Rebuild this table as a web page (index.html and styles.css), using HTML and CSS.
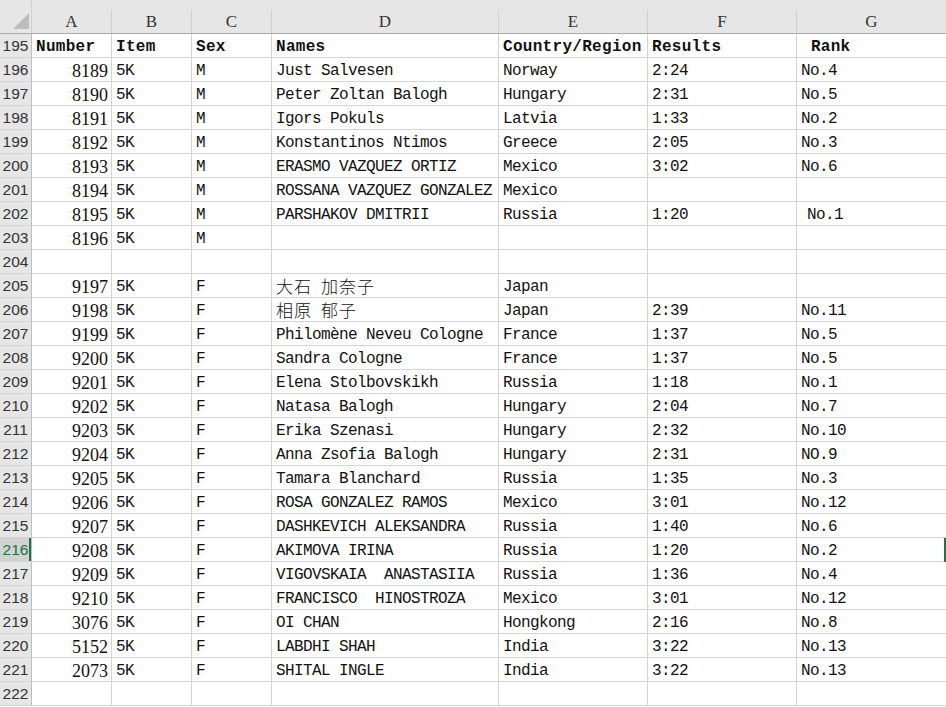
FILE: index.html
```html
<!DOCTYPE html>
<html>
<head>
<meta charset="utf-8">
<link rel="stylesheet" href="styles.css">
</head>
<body>
<div class="sheet">
  <div class="row head">
    <div class="corner"><svg width="32" height="33" viewBox="0 0 32 33"><polygon points="29,13 29,29 13,29" fill="#bdbdbd"/></svg></div>
    <div class="ch">A</div><div class="ch">B</div><div class="ch">C</div><div class="ch">D</div><div class="ch">E</div><div class="ch">F</div><div class="ch">G</div>
  </div>
  <div class="row bold"><div class="rh">195</div><div class="c">Number</div><div class="c">Item</div><div class="c">Sex</div><div class="c">Names</div><div class="c">Country/Region</div><div class="c">Results</div><div class="c"> Rank</div></div>
  <div class="row"><div class="rh">196</div><div class="c n">8189</div><div class="c">5K</div><div class="c">M</div><div class="c">Just Salvesen</div><div class="c">Norway</div><div class="c">2:24</div><div class="c">No.4</div></div>
  <div class="row"><div class="rh">197</div><div class="c n">8190</div><div class="c">5K</div><div class="c">M</div><div class="c">Peter Zoltan Balogh</div><div class="c">Hungary</div><div class="c">2:31</div><div class="c">No.5</div></div>
  <div class="row"><div class="rh">198</div><div class="c n">8191</div><div class="c">5K</div><div class="c">M</div><div class="c">Igors Pokuls</div><div class="c">Latvia</div><div class="c">1:33</div><div class="c">No.2</div></div>
  <div class="row"><div class="rh">199</div><div class="c n">8192</div><div class="c">5K</div><div class="c">M</div><div class="c">Konstantinos Ntimos</div><div class="c">Greece</div><div class="c">2:05</div><div class="c">No.3</div></div>
  <div class="row"><div class="rh">200</div><div class="c n">8193</div><div class="c">5K</div><div class="c">M</div><div class="c">ERASMO VAZQUEZ ORTIZ</div><div class="c">Mexico</div><div class="c">3:02</div><div class="c">No.6</div></div>
  <div class="row"><div class="rh">201</div><div class="c n">8194</div><div class="c">5K</div><div class="c">M</div><div class="c">ROSSANA VAZQUEZ GONZALEZ</div><div class="c">Mexico</div><div class="c"></div><div class="c"></div></div>
  <div class="row"><div class="rh">202</div><div class="c n">8195</div><div class="c">5K</div><div class="c">M</div><div class="c">PARSHAKOV DMITRII</div><div class="c">Russia</div><div class="c">1:20</div><div class="c ind">No.1</div></div>
  <div class="row"><div class="rh">203</div><div class="c n">8196</div><div class="c">5K</div><div class="c">M</div><div class="c"></div><div class="c"></div><div class="c"></div><div class="c"></div></div>
  <div class="row"><div class="rh">204</div><div class="c"></div><div class="c"></div><div class="c"></div><div class="c"></div><div class="c"></div><div class="c"></div><div class="c"></div></div>
  <div class="row"><div class="rh">205</div><div class="c n">9197</div><div class="c">5K</div><div class="c">F</div><div class="c"><span class="cjk">大石</span> <span class="cjk">加奈子</span></div><div class="c">Japan</div><div class="c"></div><div class="c"></div></div>
  <div class="row"><div class="rh">206</div><div class="c n">9198</div><div class="c">5K</div><div class="c">F</div><div class="c"><span class="cjk">相原</span> <span class="cjk">郁子</span></div><div class="c">Japan</div><div class="c">2:39</div><div class="c">No.11</div></div>
  <div class="row"><div class="rh">207</div><div class="c n">9199</div><div class="c">5K</div><div class="c">F</div><div class="c">Philomène Neveu Cologne</div><div class="c">France</div><div class="c">1:37</div><div class="c">No.5</div></div>
  <div class="row"><div class="rh">208</div><div class="c n">9200</div><div class="c">5K</div><div class="c">F</div><div class="c">Sandra Cologne</div><div class="c">France</div><div class="c">1:37</div><div class="c">No.5</div></div>
  <div class="row"><div class="rh">209</div><div class="c n">9201</div><div class="c">5K</div><div class="c">F</div><div class="c">Elena Stolbovskikh</div><div class="c">Russia</div><div class="c">1:18</div><div class="c">No.1</div></div>
  <div class="row"><div class="rh">210</div><div class="c n">9202</div><div class="c">5K</div><div class="c">F</div><div class="c">Natasa Balogh</div><div class="c">Hungary</div><div class="c">2:04</div><div class="c">No.7</div></div>
  <div class="row"><div class="rh">211</div><div class="c n">9203</div><div class="c">5K</div><div class="c">F</div><div class="c">Erika Szenasi</div><div class="c">Hungary</div><div class="c">2:32</div><div class="c">No.10</div></div>
  <div class="row"><div class="rh">212</div><div class="c n">9204</div><div class="c">5K</div><div class="c">F</div><div class="c">Anna Zsofia Balogh</div><div class="c">Hungary</div><div class="c">2:31</div><div class="c">NO.9</div></div>
  <div class="row"><div class="rh">213</div><div class="c n">9205</div><div class="c">5K</div><div class="c">F</div><div class="c">Tamara Blanchard</div><div class="c">Russia</div><div class="c">1:35</div><div class="c">No.3</div></div>
  <div class="row"><div class="rh">214</div><div class="c n">9206</div><div class="c">5K</div><div class="c">F</div><div class="c">ROSA GONZALEZ RAMOS</div><div class="c">Mexico</div><div class="c">3:01</div><div class="c">No.12</div></div>
  <div class="row"><div class="rh">215</div><div class="c n">9207</div><div class="c">5K</div><div class="c">F</div><div class="c">DASHKEVICH ALEKSANDRA</div><div class="c">Russia</div><div class="c">1:40</div><div class="c">No.6</div></div>
  <div class="row active"><div class="rh">216</div><div class="c n">9208</div><div class="c">5K</div><div class="c">F</div><div class="c">AKIMOVA IRINA</div><div class="c">Russia</div><div class="c">1:20</div><div class="c">No.2</div><div class="marker"></div></div>
  <div class="row"><div class="rh">217</div><div class="c n">9209</div><div class="c">5K</div><div class="c">F</div><div class="c">VIGOVSKAIA  ANASTASIIA</div><div class="c">Russia</div><div class="c">1:36</div><div class="c">No.4</div></div>
  <div class="row"><div class="rh">218</div><div class="c n">9210</div><div class="c">5K</div><div class="c">F</div><div class="c">FRANCISCO  HINOSTROZA</div><div class="c">Mexico</div><div class="c">3:01</div><div class="c">No.12</div></div>
  <div class="row"><div class="rh">219</div><div class="c n">3076</div><div class="c">5K</div><div class="c">F</div><div class="c">OI CHAN</div><div class="c">Hongkong</div><div class="c">2:16</div><div class="c">No.8</div></div>
  <div class="row"><div class="rh">220</div><div class="c n">5152</div><div class="c">5K</div><div class="c">F</div><div class="c">LABDHI SHAH</div><div class="c">India</div><div class="c">3:22</div><div class="c">No.13</div></div>
  <div class="row"><div class="rh">221</div><div class="c n">2073</div><div class="c">5K</div><div class="c">F</div><div class="c">SHITAL INGLE</div><div class="c">India</div><div class="c">3:22</div><div class="c">No.13</div></div>
  <div class="row"><div class="rh">222</div><div class="c"></div><div class="c"></div><div class="c"></div><div class="c"></div><div class="c"></div><div class="c"></div><div class="c"></div></div>
</div>
</body>
</html>
```
FILE: styles.css
```css
html, body {
  margin: 0;
  padding: 0;
  background: #ffffff;
}
.sheet {
  width: 946px;
  height: 707px;
  overflow: hidden;
  font-family: "Liberation Mono", monospace;
  font-size: 16px;
  letter-spacing: -0.6px;
  color: #111;
}
.row {
  position: relative;
  display: grid;
  grid-template-columns: 32px 80px 80px 80px 227px 149px 149px 150px;
  height: 24px;
}
.row > div {
  box-sizing: border-box;
}
.head {
  height: 34px;
  background: #e6e6e6;
  border-bottom: 1px solid #ababab;
  box-sizing: border-box;
}
.corner {
  height: 33px;
  border-right: 1px solid #d0d0d0;
}
.corner svg {
  display: block;
}
.ch {
  margin-top: 10px;
  height: 23px;
  border-right: 1px solid #d0d0d0;
  text-align: center;
  line-height: 24px;
  font-family: "Liberation Serif", serif;
  font-size: 17px;
  letter-spacing: 0;
  color: #333;
}
.rh {
  background: #e6e6e6;
  border-right: 1px solid #bdbdbd;
  border-bottom: 1px solid #d4d4d4;
  text-align: center;
  padding-top: 1px;
  line-height: 22px;
  font-family: "Liberation Sans", sans-serif;
  font-size: 15.5px;
  letter-spacing: 0;
  color: #333;
}
.c {
  border-right: 1px solid #d4d4d4;
  border-bottom: 1px solid #d4d4d4;
  padding: 2px 3px 0 4px;
  line-height: 22px;
  white-space: pre;
  overflow: hidden;
}
.n {
  text-align: right;
  font-family: "Liberation Serif", serif;
  font-size: 18px;
  letter-spacing: 0;
}
.ind {
  padding-left: 10px;
}
.bold .c {
  font-weight: bold;
  letter-spacing: 0.3px;
}
.cjk {
  font-family: "Noto Sans CJK JP", sans-serif;
  font-size: 17px;
  letter-spacing: 1px;
  font-weight: 300;
  line-height: 20px;
}
.active .rh {
  background: #d2d2d2;
  color: #217346;
  box-shadow: inset -2px 0 0 #217346;
}
.marker {
  position: absolute;
  right: 0;
  top: 0;
  width: 2px;
  height: 24px;
  background: #217346;
}
```
